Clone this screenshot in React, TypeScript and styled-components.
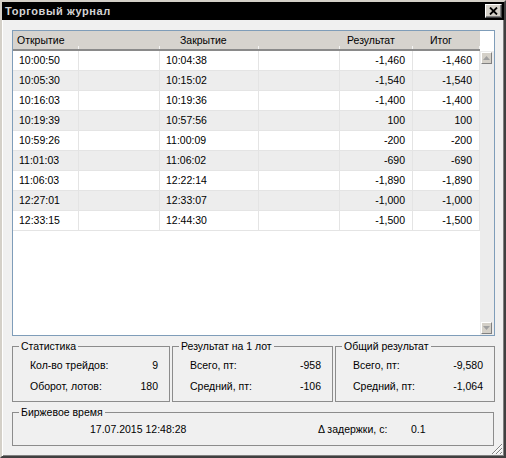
import styled, { createGlobalStyle } from "styled-components";

const GlobalStyle = createGlobalStyle`
  html, body {
    margin: 0;
    padding: 0;
    background: #f0f0f0;
  }
  * {
    box-sizing: border-box;
  }
`;

const Window = styled.div`
  position: relative;
  width: 506px;
  height: 458px;
  display: flex;
  flex-direction: column;
  background: #f0f0f0;
  border: 2px solid;
  border-color: #d4d0c8 #404040 #404040 #d4d0c8;
  box-shadow: inset 1px 1px 0 #fff, inset -1px -1px 0 #808080;
  font-family: "Liberation Sans", Arial, sans-serif;
  font-size: 10.5px;
  color: #000;
`;

const TitleBar = styled.div`
  height: 18px;
  background: #000;
  display: flex;
  align-items: center;
  justify-content: space-between;
  padding: 0 2px 0 3px;
`;

const Title = styled.span`
  color: #d4d4d4;
  font-weight: bold;
  font-size: 11px;
  letter-spacing: 0.6px;
`;

const CloseButton = styled.button`
  width: 17px;
  height: 14px;
  padding: 0;
  display: flex;
  align-items: center;
  justify-content: center;
  background: #d4d0c8;
  border: 1px solid;
  border-color: #fff #404040 #404040 #fff;
  box-shadow: inset -1px -1px 0 #808080;
`;

const Body = styled.div`
  flex: 1;
  display: flex;
  flex-direction: column;
  padding: 10px 8px 0 10px;
`;

const TablePanel = styled.div`
  width: 483px;
  height: 306px;
  border: 1px solid #7f9db9;
  background: #fff;
  display: flex;
`;

const TableArea = styled.div`
  width: 467px;
  display: flex;
  flex-direction: column;
`;

const HeaderRow = styled.div`
  display: flex;
  height: 20px;
  background: #d6d3ce;
  border-bottom: 2px solid #8a8a8a;
`;

const HeaderCell = styled.div<{ $w: number; $pad: number }>`
  position: relative;
  width: ${({ $w }) => $w}px;
  padding-left: ${({ $pad }) => $pad}px;
  line-height: 18px;
  white-space: nowrap;
  &::after {
    content: "";
    position: absolute;
    right: 0;
    bottom: 0;
    width: 1px;
    height: 3px;
    background: #f4f4f4;
  }
`;

const Row = styled.div<{ $alt: boolean }>`
  display: flex;
  height: 20px;
  background: ${({ $alt }) => ($alt ? "#ededed" : "#fff")};
  border-bottom: 1px solid #e4e4e4;
`;

const Cell = styled.div<{ $w: number; $right?: boolean; $pad: number }>`
  width: ${({ $w }) => $w}px;
  border-right: 1px solid #e4e4e4;
  line-height: 19px;
  text-align: ${({ $right }) => ($right ? "right" : "left")};
  padding: ${({ $right, $pad }) => ($right ? `0 ${$pad}px 0 0` : `0 0 0 ${$pad}px`)};
  white-space: nowrap;
`;

const ScrollColumn = styled.div`
  width: 14px;
  display: flex;
  flex-direction: column;
`;

const ScrollHead = styled.div`
  height: 20px;
  background: #fff;
`;

const ScrollTrack = styled.div`
  flex: 1;
  background: #ececec;
  display: flex;
  flex-direction: column;
  justify-content: space-between;
  padding: 1px 2px 1px 1px;
`;

const ScrollButton = styled.div`
  width: 11px;
  height: 12px;
  display: flex;
  align-items: center;
  justify-content: center;
  background: #d4d0c8;
  border: 1px solid;
  border-color: #fff #808080 #808080 #fff;
`;

const GroupRow = styled.div`
  width: 483px;
  margin-top: 4px;
  display: grid;
  grid-template-columns: 158px 161px 1fr;
  gap: 2px;
`;

const Group = styled.fieldset<{ $h: number }>`
  margin: 0;
  padding: 0;
  min-width: 0;
  height: ${({ $h }) => $h}px;
  border: 1px solid #8c8c8c;
`;

const Legend = styled.legend`
  margin-left: 6px;
  padding: 0 2px;
  line-height: 12px;
`;

const StatsGrid = styled.div`
  display: grid;
  grid-template-columns: 1fr auto;
  padding: 3px 11px 0 17px;
  line-height: 21px;
`;

const Value = styled.span`
  text-align: right;
`;

const TimeGroup = styled(Group)`
  width: 482px;
  margin-top: 4px;
`;

const TimeRow = styled.div`
  display: grid;
  grid-template-columns: 228px 93px auto;
  padding: 1px 0 0 77px;
  line-height: 21px;
`;

const Grip = styled.svg`
  position: absolute;
  right: 1px;
  bottom: 1px;
`;

const columns = [66, 81, 99, 81, 73, 67];

const trades = [
  ["10:00:50", "10:04:38", "-1,460", "-1,460"],
  ["10:05:30", "10:15:02", "-1,540", "-1,540"],
  ["10:16:03", "10:19:36", "-1,400", "-1,400"],
  ["10:19:39", "10:57:56", "100", "100"],
  ["10:59:26", "11:00:09", "-200", "-200"],
  ["11:01:03", "11:06:02", "-690", "-690"],
  ["11:06:03", "12:22:14", "-1,890", "-1,890"],
  ["12:27:01", "12:33:07", "-1,000", "-1,000"],
  ["12:33:15", "12:44:30", "-1,500", "-1,500"],
];

const Arrow = ({ down }: { down?: boolean }) => (
  <svg width="7" height="4" viewBox="0 0 7 4">
    <polygon
      points={down ? "0,0 7,0 3.5,4" : "0,4 7,4 3.5,0"}
      fill="#a0a0a0"
    />
  </svg>
);

const App = () => {
  return (
    <>
      <GlobalStyle />
      <Window>
        <TitleBar>
          <Title>Торговый журнал</Title>
          <CloseButton>
            <svg width="9" height="8" viewBox="0 0 9 8">
              <path d="M1 0.5 L8 7.5 M8 0.5 L1 7.5" stroke="#000" strokeWidth="1.8" />
            </svg>
          </CloseButton>
        </TitleBar>
        <Body>
          <TablePanel>
            <TableArea>
              <HeaderRow>
                <HeaderCell $w={columns[0]} $pad={4}>Открытие</HeaderCell>
                <HeaderCell $w={columns[1]} $pad={0} />
                <HeaderCell $w={columns[2]} $pad={20}>Закрытие</HeaderCell>
                <HeaderCell $w={columns[3]} $pad={0} />
                <HeaderCell $w={columns[4]} $pad={7}>Результат</HeaderCell>
                <HeaderCell $w={columns[5]} $pad={17}>Итог</HeaderCell>
              </HeaderRow>
              {trades.map((t, i) => (
                <Row key={t[0]} $alt={i % 2 === 1}>
                  <Cell $w={columns[0]} $pad={6}>{t[0]}</Cell>
                  <Cell $w={columns[1]} $pad={0} />
                  <Cell $w={columns[2]} $pad={6}>{t[1]}</Cell>
                  <Cell $w={columns[3]} $pad={0} />
                  <Cell $w={columns[4]} $right $pad={7}>{t[2]}</Cell>
                  <Cell $w={columns[5]} $right $pad={7}>{t[3]}</Cell>
                </Row>
              ))}
            </TableArea>
            <ScrollColumn>
              <ScrollHead />
              <ScrollTrack>
                <ScrollButton>
                  <Arrow />
                </ScrollButton>
                <ScrollButton>
                  <Arrow down />
                </ScrollButton>
              </ScrollTrack>
            </ScrollColumn>
          </TablePanel>

          <GroupRow>
            <Group $h={62}>
              <Legend>Статистика</Legend>
              <StatsGrid>
                <span>Кол-во трейдов:</span>
                <Value>9</Value>
                <span>Оборот, лотов:</span>
                <Value>180</Value>
              </StatsGrid>
            </Group>
            <Group $h={62}>
              <Legend>Результат на 1 лот</Legend>
              <StatsGrid>
                <span>Всего, пт:</span>
                <Value>-958</Value>
                <span>Средний, пт:</span>
                <Value>-106</Value>
              </StatsGrid>
            </Group>
            <Group $h={62}>
              <Legend>Общий результат</Legend>
              <StatsGrid>
                <span>Всего, пт:</span>
                <Value>-9,580</Value>
                <span>Средний, пт:</span>
                <Value>-1,064</Value>
              </StatsGrid>
            </Group>
          </GroupRow>

          <TimeGroup $h={40}>
            <Legend>Биржевое время</Legend>
            <TimeRow>
              <span>17.07.2015 12:48:28</span>
              <span>Δ задержки, с:</span>
              <span>0.1</span>
            </TimeRow>
          </TimeGroup>
        </Body>
        <Grip width="13" height="13" viewBox="0 0 13 13">
          <path
            d="M12 2 L2 12 M12 6 L6 12 M12 10 L10 12"
            stroke="#808080"
            strokeWidth="1"
          />
          <path
            d="M12 3 L3 12 M12 7 L7 12 M12 11 L11 12"
            stroke="#fff"
            strokeWidth="1"
          />
        </Grip>
      </Window>
    </>
  );
};

export default App;
